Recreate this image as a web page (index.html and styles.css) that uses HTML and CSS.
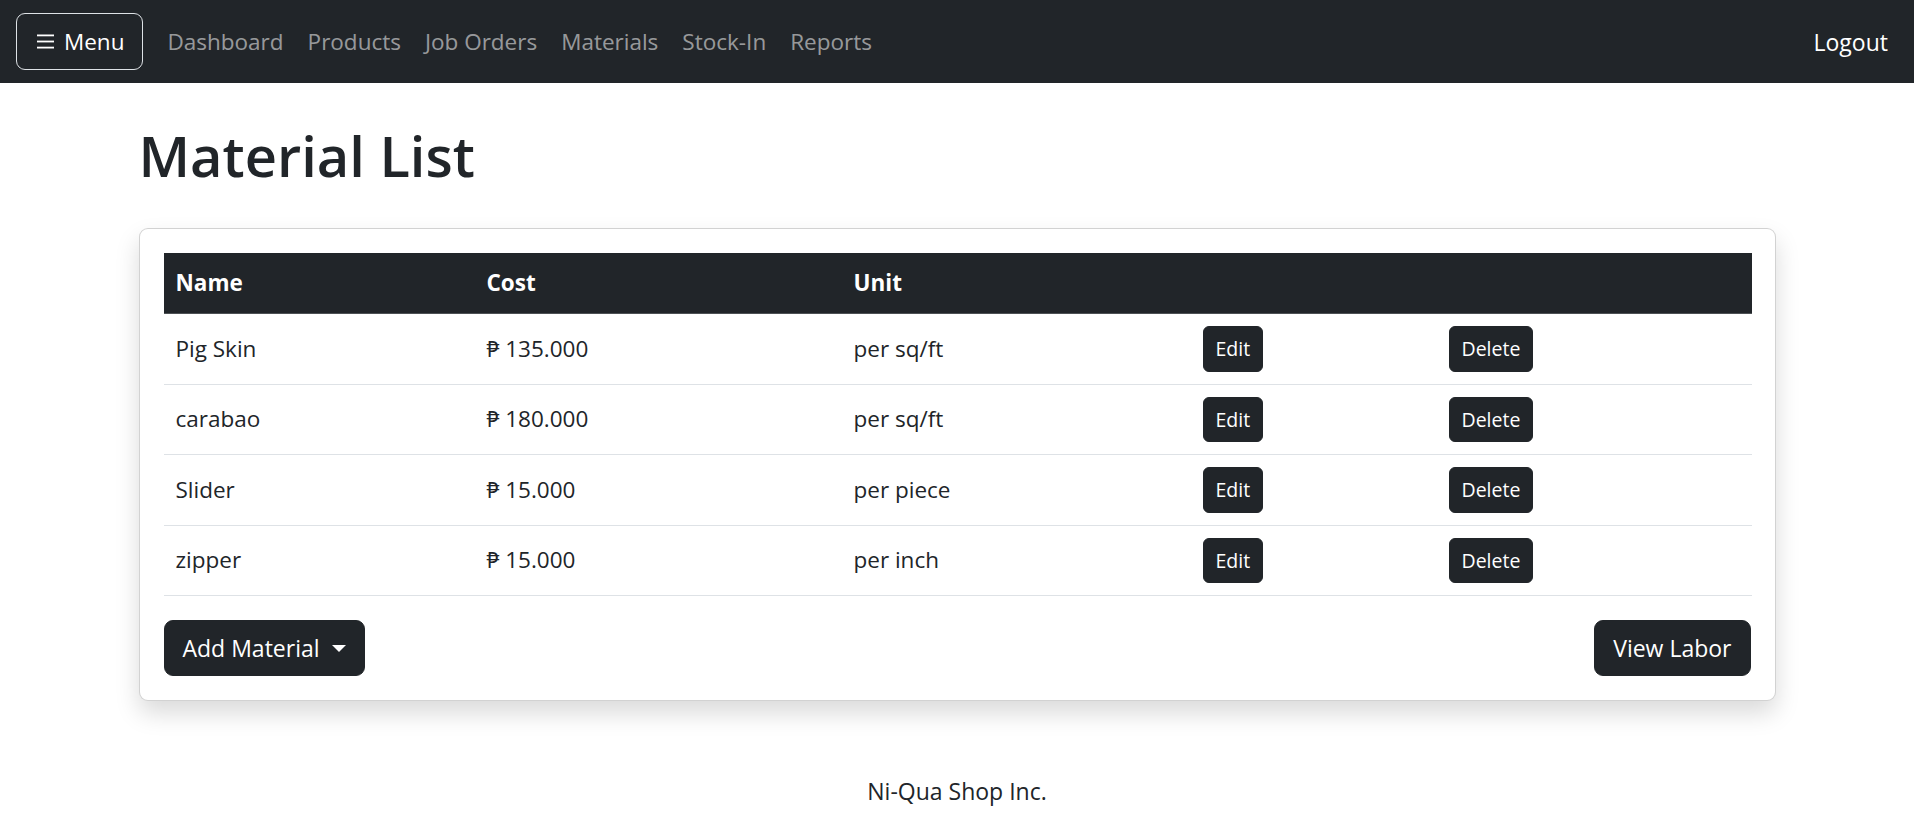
FILE: index.html
```html
<!DOCTYPE html>
<html lang="en">
<head>
<meta charset="utf-8">
<title>Material List</title>
<link rel="stylesheet" href="styles.css">
</head>
<body>
<nav class="navbar">
  <button class="menu-btn" type="button">
    <svg class="burger" width="17" height="15" viewBox="0 0 17 15"><rect x="0" y="0.5" width="17" height="1.8" fill="#fff"/><rect x="0" y="6.6" width="17" height="1.8" fill="#fff"/><rect x="0" y="12.7" width="17" height="1.8" fill="#fff"/></svg>
    <span>Menu</span>
  </button>
  <ul class="nav-links">
    <li><a href="#">Dashboard</a></li>
    <li><a href="#">Products</a></li>
    <li><a href="#">Job Orders</a></li>
    <li><a href="#">Materials</a></li>
    <li><a href="#">Stock-In</a></li>
    <li><a href="#">Reports</a></li>
  </ul>
  <a class="logout" href="#">Logout</a>
</nav>

<main class="container">
  <h1 class="page-title">Material List</h1>
  <section class="card">
    <table class="table">
      <colgroup>
        <col class="c-name"><col class="c-cost"><col class="c-unit"><col class="c-edit"><col class="c-del">
      </colgroup>
      <thead>
        <tr><th>Name</th><th>Cost</th><th>Unit</th><th></th><th></th></tr>
      </thead>
      <tbody>
        <tr><td>Pig Skin</td><td>₱ 135.000</td><td>per sq/ft</td><td><button class="btn-sm">Edit</button></td><td><button class="btn-sm">Delete</button></td></tr>
        <tr><td>carabao</td><td>₱ 180.000</td><td>per sq/ft</td><td><button class="btn-sm">Edit</button></td><td><button class="btn-sm">Delete</button></td></tr>
        <tr><td>Slider</td><td>₱ 15.000</td><td>per piece</td><td><button class="btn-sm">Edit</button></td><td><button class="btn-sm">Delete</button></td></tr>
        <tr><td>zipper</td><td>₱ 15.000</td><td>per inch</td><td><button class="btn-sm">Edit</button></td><td><button class="btn-sm">Delete</button></td></tr>
      </tbody>
    </table>
    <div class="actions">
      <button class="btn">Add Material<span class="caret"></span></button>
      <button class="btn">View Labor</button>
    </div>
  </section>
</main>

<footer class="footer">Ni-Qua Shop Inc.</footer>
</body>
</html>
```

FILE: styles.css
```css
* { box-sizing: border-box; }

body {
  margin: 0;
  font-family: "Open Sans", "Noto Sans", sans-serif;
  font-size: 22.5px;
  line-height: 36px;
  color: #212529;
  background: #fff;
}

.navbar {
  display: flex;
  align-items: center;
  height: 83px;
  padding: 0 26px 0 16px;
  background: #212529;
}

.menu-btn {
  display: inline-flex;
  align-items: center;
  gap: 10px;
  height: 57px;
  padding: 0 18px 0 20px;
  border: 1.5px solid #dee2e6;
  border-radius: 9px;
  background: transparent;
  color: #fff;
  font-family: inherit;
  font-size: 22.5px;
}

.nav-links {
  display: flex;
  list-style: none;
  margin: 0 0 0 12px;
  padding: 0;
}

.nav-links a {
  display: block;
  padding: 0 12px;
  font-size: 22.5px;
  color: rgba(255, 255, 255, 0.55);
  text-decoration: none;
}

.logout {
  margin-left: auto;
  font-size: 23px;
  color: #fff;
  text-decoration: none;
}

.container {
  width: 1637px;
  margin: 0 auto;
}

.page-title {
  margin: 39px 0 39px;
  font-size: 56px;
  font-weight: 600;
  line-height: 1.2;
}

.card {
  padding: 24px;
  border: 1px solid rgba(0, 0, 0, 0.175);
  border-radius: 9px;
  background: #fff;
  box-shadow: 0 12px 24px rgba(0, 0, 0, 0.15);
}

.table {
  width: 100%;
  border-collapse: collapse;
  table-layout: fixed;
}

.c-name { width: 311px; }
.c-cost { width: 367px; }
.c-unit { width: 349px; }
.c-edit { width: 246px; }
.c-del { width: 315px; }

.table th {
  padding: 12px;
  text-align: left;
  font-weight: 700;
  background: #212529;
  color: #fff;
  border-bottom: 1px solid #4d5154;
}

.table td {
  padding: 12px;
  vertical-align: middle;
  border-bottom: 1px solid #dee2e6;
}

.btn-sm {
  display: inline-flex;
  align-items: center;
  height: 45.5px;
  padding: 0 12px;
  border: 1.5px solid #212529;
  border-radius: 6px;
  background: #212529;
  color: #fff;
  font-family: inherit;
  font-size: 19.5px;
  vertical-align: middle;
}

.actions {
  display: flex;
  justify-content: space-between;
  margin-top: 24px;
}

.btn {
  display: inline-flex;
  align-items: center;
  height: 56px;
  padding: 0 18px;
  border: 1.5px solid #212529;
  border-radius: 9px;
  background: #212529;
  color: #fff;
  font-family: inherit;
  font-size: 23px;
}

.caret {
  display: inline-block;
  margin-left: 12px;
  border-top: 7px solid #fff;
  border-left: 7px solid transparent;
  border-right: 7px solid transparent;
}

.footer {
  margin-top: 72px;
  text-align: center;
  font-size: 23px;
}
```
